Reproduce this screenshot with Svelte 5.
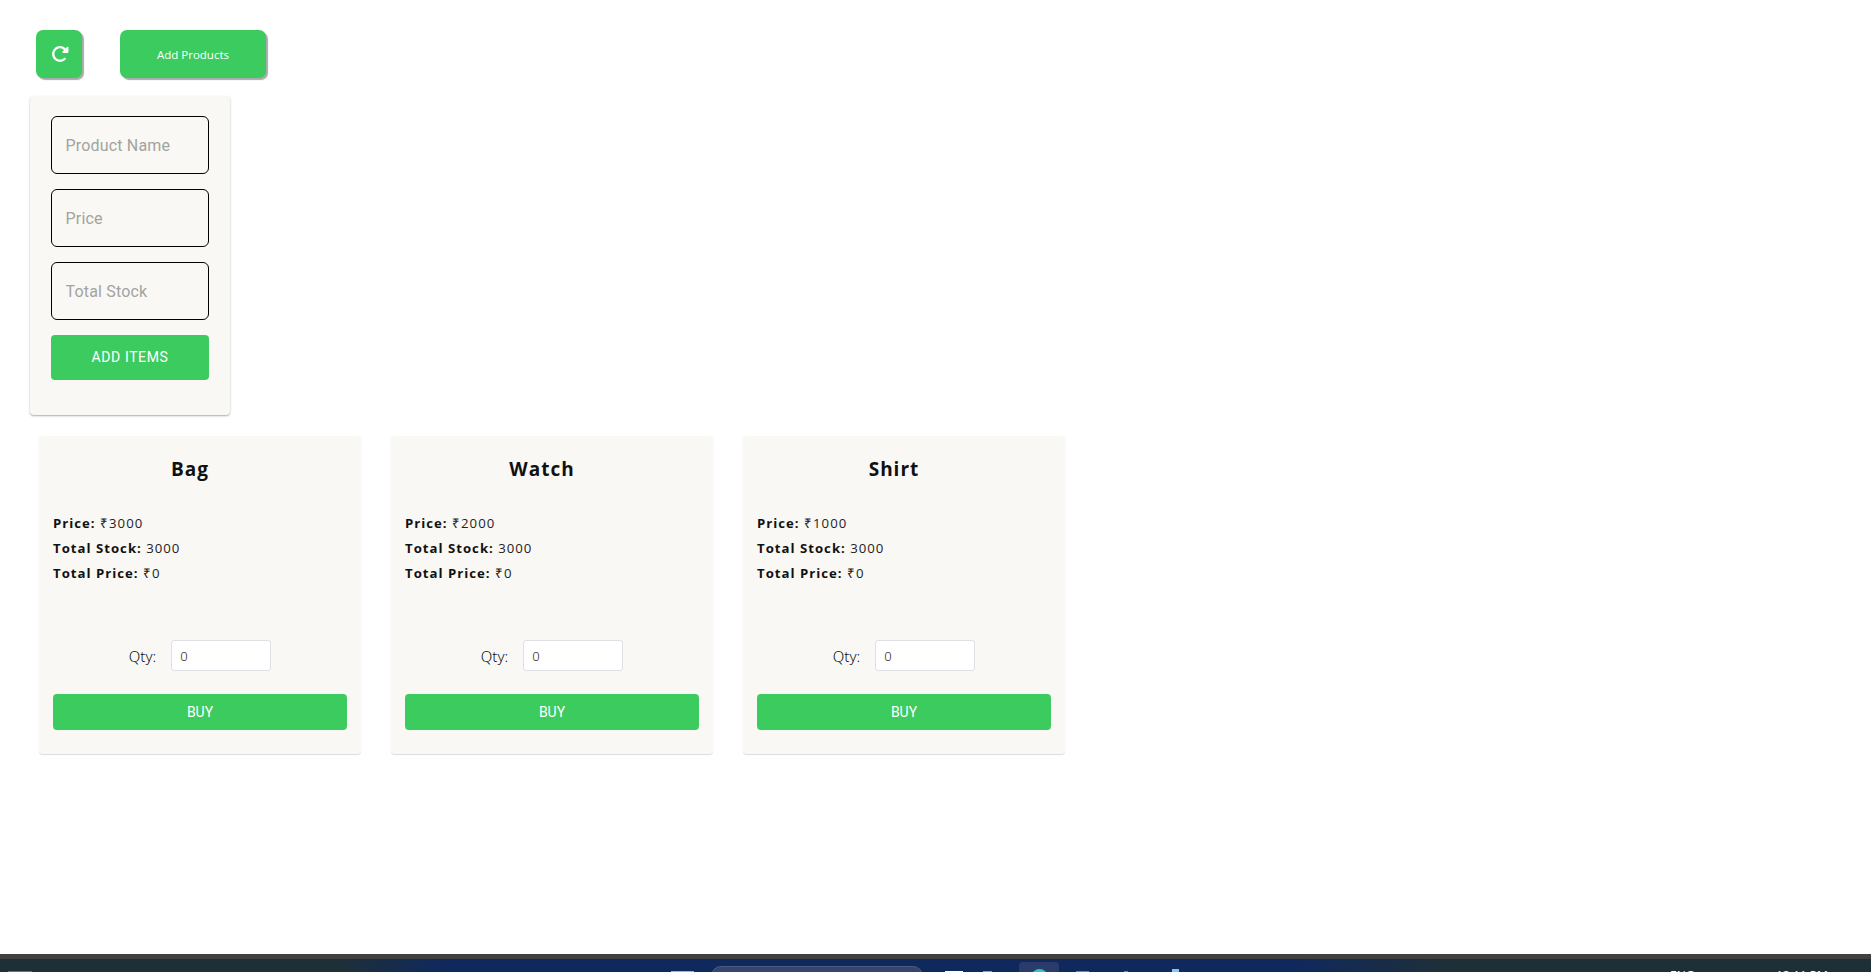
<script>
	const products = [
		{ name: 'Bag', price: 3000, stock: 3000 },
		{ name: 'Watch', price: 2000, stock: 3000 },
		{ name: 'Shirt', price: 1000, stock: 3000 }
	];
</script>

<div class="page">
	<main>
		<div class="actions">
			<button class="action refresh" aria-label="Refresh">
				<svg viewBox="0 0 512 512" width="18" height="18">
					<path fill="#fff" d="M463.5 224H472c13.3 0 24-10.7 24-24V72c0-9.700-5.800-18.500-14.800-22.200s-19.300-1.700-26.200 5.200L413.400 96.600c-87.600-86.500-228.700-86.200-315.800 1c-87.500 87.500-87.500 229.300 0 316.800s229.300 87.500 316.800 0c12.500-12.500 12.500-32.800 0-45.300s-32.800-12.500-45.300 0c-62.500 62.500-163.800 62.500-226.300 0s-62.500-163.800 0-226.300c62.200-62.200 162.700-62.500 225.300-1L327 183c-6.900 6.900-8.900 17.200-5.200 26.200s12.500 14.800 22.200 14.800H463.500z" />
				</svg>
			</button>
			<button class="action add">Add Products</button>
		</div>

		<form class="add-form" on:submit|preventDefault>
			<input type="text" placeholder="Product Name" />
			<input type="text" placeholder="Price" />
			<input type="text" placeholder="Total Stock" />
			<button class="submit">ADD ITEMS</button>
		</form>

		<div class="products">
			{#each products as p (p.name)}
				<div class="card">
					<h2>{p.name}</h2>
					<div class="details">
						<p><b>Price:</b> ₹{p.price}</p>
						<p><b>Total Stock:</b> {p.stock}</p>
						<p><b>Total Price:</b> ₹0</p>
					</div>
					<div class="qty">
						<label for="qty-{p.name}">Qty:</label>
						<input id="qty-{p.name}" type="number" value="0" />
					</div>
					<button class="buy">BUY</button>
				</div>
			{/each}
		</div>
	</main>

	<div class="taskbar">
		<span class="tb-icon start"></span>
		<span class="tb-icon win"></span>
		<span class="search"></span>
		<span class="tb-icon files"></span>
		<span class="tb-icon folder"></span>
		<span class="app-active"></span>
		<span class="tb-icon edge"></span>
		<span class="tb-icon store"></span>
		<span class="tb-icon dot-a"></span>
		<span class="tb-icon dot-b"></span>
		<span class="tray lang">ENG</span>
		<span class="tray clock">12:11 PM</span>
	</div>
</div>

<style>
	:global(body) {
		margin: 0;
		background: #fff;
		font-family: 'Open Sans', sans-serif;
	}

	.page {
		height: 972px;
		display: flex;
		flex-direction: column;
		overflow: hidden;
	}

	main {
		flex: 1;
	}

	.actions {
		display: flex;
		gap: 38px;
		padding: 30px 0 0 36px;
	}

	.action {
		height: 48px;
		border: none;
		border-radius: 7px;
		background: #3ccb5f;
		color: #fff;
		box-shadow: 2px 2px 1px #aaa;
		display: flex;
		align-items: center;
		justify-content: center;
		padding: 0;
	}

	.refresh {
		width: 46px;
	}

	.refresh svg {
		margin-left: 2px;
	}

	.add {
		width: 146px;
		font-family: 'Open Sans', sans-serif;
		font-size: 11.500px;
		font-weight: 500;
	}

	.add-form {
		width: 158px;
		margin: 18px 0 0 30px;
		padding: 20px 21px 35px;
		background: #f9f8f4;
		border-radius: 4px;
		box-shadow: 0 1px 2px #aaa;
		display: flex;
		flex-direction: column;
		gap: 15px;
	}

	.add-form input {
		box-sizing: border-box;
		width: 100%;
		height: 58px;
		padding: 0 13.500px;
		border: 1.500px solid #000;
		border-radius: 6px;
		background: transparent;
		font-family: Roboto, sans-serif;
		font-size: 16px;
		letter-spacing: 0.180px;
	}

	.add-form input::placeholder {
		color: #a3a3a0;
		opacity: 1;
	}

	.submit,
	.buy {
		display: block;
		width: 100%;
		border: none;
		border-radius: 4px;
		background: #3ccb5f;
		color: #fff;
		font-family: Roboto, sans-serif;
		font-weight: 400;
		padding-bottom: 2px;
	}

	.submit {
		height: 45px;
		font-size: 14px;
		letter-spacing: 0.600px;
	}

	.products {
		display: flex;
		gap: 30px;
		margin: 21px 0 0 39px;
	}

	.card {
		box-sizing: border-box;
		width: 322px;
		height: 318px;
		padding: 19px 14px 0;
		background: #f9f8f4;
		border-radius: 4px;
		box-shadow: 0 1px 1px #ddd;
	}

	h2 {
		margin: 0 0 0 -20px;
		text-align: center;
		font-size: 19px;
		font-weight: 700;
		letter-spacing: 1px;
		line-height: 28px;
		color: #111;
	}

	.details {
		margin-top: 28px;
		font-size: 13.200px;
		letter-spacing: 1px;
		line-height: 25px;
		color: #222;
		font-weight: 400;
	}

	.details p {
		margin: 0;
	}

	.details b {
		color: #111;
		font-weight: 700;
	}

	.qty {
		display: flex;
		align-items: center;
		justify-content: center;
		gap: 15px;
		margin-top: 54px;
		font-family: 'Noto Sans', sans-serif;
		font-size: 15px;
		font-weight: 300;
		color: #111;
	}

	.qty input {
		box-sizing: border-box;
		width: 100px;
		height: 31px;
		padding: 0 8px;
		background: #fff;
		border: 1px solid #dfdfe6;
		border-radius: 3px;
		font-family: 'Noto Sans', sans-serif;
		font-size: 13px;
		font-weight: 300;
		color: #222;
	}

	.buy {
		height: 36px;
		margin-top: 23px;
		font-size: 14px;
	}

	.taskbar {
		position: relative;
		height: 13px;
		border-top: 5px solid #404040;
		background: linear-gradient(90deg, #1f2f38 0, #1f2f38 340px, #10295c 440px, #10295c 1300px, #1f2f38 1450px);
		overflow: hidden;
	}

	.tb-icon {
		position: absolute;
		top: 12px;
		height: 10px;
	}

	.start {
		left: 8px;
		width: 24px;
		background: #1689d0;
	}

	.win {
		left: 671px;
		width: 23px;
		background: #6cc6f0;
	}

	.files {
		left: 945px;
		width: 18px;
		background: #fff;
	}

	.folder {
		left: 983px;
		width: 9px;
		background: #c09a4a;
	}

	.edge {
		left: 1031px;
		top: 10px;
		width: 17px;
		height: 17px;
		border-radius: 50%;
		background: #2cc5c9;
	}

	.store {
		left: 1076px;
		width: 13px;
		background: #2d9fe8;
	}

	.dot-a {
		left: 1124px;
		width: 4px;
		background: #2d9fe8;
	}

	.dot-b {
		left: 1172px;
		top: 10px;
		width: 7px;
		background: #7fc8ee;
	}

	.search {
		position: absolute;
		left: 711px;
		top: 7px;
		width: 212px;
		height: 20px;
		box-sizing: border-box;
		border-radius: 10px;
		background: #36456e;
		border: 1px solid #4a5c88;
	}

	.app-active {
		position: absolute;
		left: 1019px;
		top: 3px;
		width: 40px;
		height: 20px;
		border-radius: 4px;
		background: #2a3c6a;
	}

	.tray {
		position: absolute;
		top: 9px;
		color: #fff;
		font-family: 'Open Sans', sans-serif;
		font-size: 12px;
		line-height: 16px;
	}

	.lang {
		left: 1670px;
	}

	.clock {
		left: 1776px;
	}
</style>
